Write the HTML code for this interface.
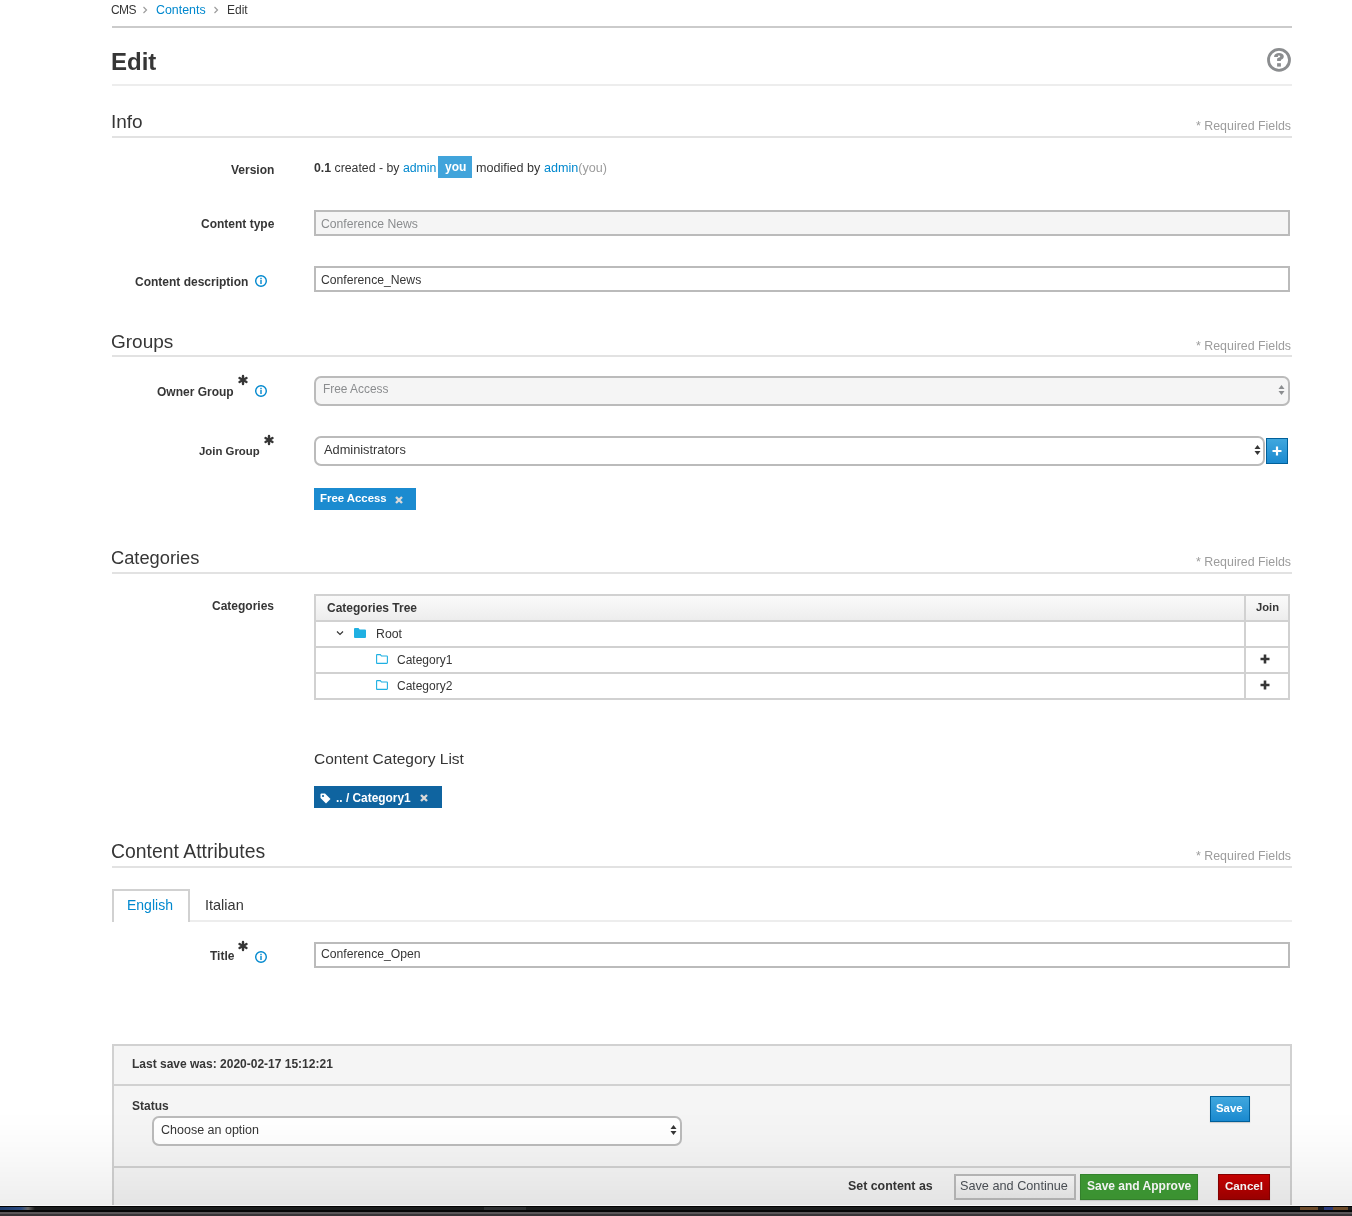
<!DOCTYPE html>
<html><head><meta charset="utf-8">
<style>
html,body{margin:0;padding:0;}
body{width:1352px;height:1216px;position:relative;overflow:hidden;background:#fff;font-family:"Liberation Sans",sans-serif;color:#363636;}
.t{position:absolute;white-space:nowrap;line-height:1;font-size:12px;will-change:transform;}
.b{font-weight:bold;}
.r{text-align:right;}
.lnk{color:#0088ce;}
.hl{position:absolute;left:112px;width:1180px;}
.box{position:absolute;box-sizing:border-box;}
svg{position:absolute;overflow:visible;}
</style></head><body>

<!-- breadcrumb -->
<div class="t" style="left:111px;top:4px;font-size:12px;letter-spacing:-0.6px;">CMS</div>
<svg style="left:142px;top:6px" width="6" height="8"><path d="M1.5 1 L4.5 4 L1.5 7" fill="none" stroke="#9c9c9c" stroke-width="1.2"/></svg>
<div class="t lnk" style="left:156px;top:4px;font-size:12.4px;">Contents</div>
<svg style="left:213px;top:6px" width="6" height="8"><path d="M1.5 1 L4.5 4 L1.5 7" fill="none" stroke="#9c9c9c" stroke-width="1.2"/></svg>
<div class="t" style="left:227px;top:4px;font-size:12px;">Edit</div>
<div class="hl" style="top:26px;height:2px;background:#cbcbcb;"></div>

<!-- title -->
<div class="t b" style="left:111px;top:50px;font-size:24px;">Edit</div>
<svg style="left:1267px;top:48px" width="24" height="24" viewBox="0 0 24 24">
 <circle cx="12" cy="11.9" r="10.5" fill="none" stroke="#8b8d8f" stroke-width="2.8"/>
 <path d="M7 8.9 C7.2 6.3 9.3 5.1 12 5.1 C14.9 5.1 16.8 6.5 16.8 8.6 C16.8 11 14.5 11.6 13.9 12 V13.1 H10.1 V11 C10.1 10 12.2 9.6 13 9 C13.4 8.7 13.3 7.6 12 7.6 C11.2 7.6 10.9 8.1 10.9 8.9 Z" fill="#8b8d8f"/>
 <rect x="10.1" y="15.2" width="3.8" height="3.4" fill="#8b8d8f"/>
</svg>
<div class="hl" style="top:84px;height:2px;background:#ededed;"></div>

<!-- Info -->
<div class="t" style="left:111px;top:112px;font-size:19px;">Info</div>
<div class="t r" style="right:61px;top:120px;font-size:12.4px;color:#9c9c9c;">* Required Fields</div>
<div class="hl" style="top:136px;height:2px;background:#e2e2e2;"></div>

<div class="t b r" style="right:1078px;top:164px;">Version</div>
<div class="t" style="left:314px;top:162px;font-size:12.3px;"><b>0.1</b> created - by <span class="lnk">admin</span></div>
<div class="box" style="left:438px;top:156px;width:34px;height:22px;background:#41a4db;"></div>
<div class="t b" style="left:445px;top:161px;font-size:12px;color:#fff;">you</div>
<div class="t" style="left:476px;top:162px;font-size:12.6px;">modified by <span class="lnk">admin</span><span style="color:#9c9c9c">(you)</span></div>

<div class="t b r" style="right:1078px;top:218px;">Content type</div>
<div class="box" style="left:314px;top:210px;width:976px;height:26px;border:2px solid #bbb;background:#f5f5f5;"></div>
<div class="t" style="left:321px;top:218px;font-size:12.2px;color:#8b8d8f;">Conference News</div>

<div class="t b r" style="right:1104px;top:276px;">Content description</div>
<svg style="left:255px;top:275px" width="12" height="12" viewBox="0 0 12 12"><circle cx="6" cy="6" r="5.3" fill="none" stroke="#0088ce" stroke-width="1.4"/><rect x="5.3" y="2.8" width="1.4" height="1.3" fill="#0088ce"/><rect x="5.3" y="4.8" width="1.4" height="4.2" fill="#0088ce"/></svg>
<div class="box" style="left:314px;top:266px;width:976px;height:26px;border:2px solid #bbb;background:#fff;"></div>
<div class="t" style="left:321px;top:274px;font-size:12.2px;">Conference_News</div>

<!-- Groups -->
<div class="t" style="left:111px;top:332px;font-size:19px;">Groups</div>
<div class="t r" style="right:61px;top:340px;font-size:12.4px;color:#9c9c9c;">* Required Fields</div>
<div class="hl" style="top:355px;height:2px;background:#e2e2e2;"></div>

<div class="t b r" style="right:1118px;top:386px;">Owner Group</div>
<svg style="left:238px;top:375px" width="10" height="10" viewBox="0 0 10 10"><g stroke="#363636" stroke-width="2.4" stroke-linecap="round"><path d="M5 1 V9"/><path d="M1.5 3 L8.5 7"/><path d="M1.5 7 L8.5 3"/></g></svg>
<svg style="left:255px;top:385px" width="12" height="12" viewBox="0 0 12 12"><circle cx="6" cy="6" r="5.3" fill="none" stroke="#0088ce" stroke-width="1.4"/><rect x="5.3" y="2.8" width="1.4" height="1.3" fill="#0088ce"/><rect x="5.3" y="4.8" width="1.4" height="4.2" fill="#0088ce"/></svg>
<div class="box" style="left:314px;top:376px;width:976px;height:30px;border:2px solid #bbb;border-radius:7px;background:#f5f5f5;"></div>
<div class="t" style="left:323px;top:384px;font-size:11.9px;color:#8b8d8f;">Free Access</div>
<svg style="left:1278px;top:384px" width="7" height="12" viewBox="0 0 7 12"><path d="M3.5 1 L6.5 5 H0.5 Z M3.5 11 L6.5 7 H0.5 Z" fill="#8b8d8f"/></svg>

<div class="t b r" style="right:1092px;top:446px;font-size:11.4px;">Join Group</div>
<svg style="left:264px;top:435px" width="10" height="10" viewBox="0 0 10 10"><g stroke="#363636" stroke-width="2.4" stroke-linecap="round"><path d="M5 1 V9"/><path d="M1.5 3 L8.5 7"/><path d="M1.5 7 L8.5 3"/></g></svg>
<div class="box" style="left:314px;top:436px;width:951px;height:30px;border:2px solid #bbb;border-radius:7px;background:#fff;"></div>
<div class="t" style="left:324px;top:444px;font-size:12.8px;">Administrators</div>
<svg style="left:1254px;top:444px" width="7" height="12" viewBox="0 0 7 12"><path d="M3.5 1 L6.5 5 H0.5 Z M3.5 11 L6.5 7 H0.5 Z" fill="#363636"/></svg>
<div class="box" style="left:1266px;top:438px;width:22px;height:26px;border:1.5px solid #00609a;background:linear-gradient(#40a7de,#1b8ad0);"></div>
<svg style="left:1272px;top:446px" width="10" height="10" viewBox="0 0 10 10"><path d="M5 0.5 V9.5 M0.5 5 H9.5" stroke="#fff" stroke-width="2.2"/></svg>

<div class="box" style="left:314px;top:488px;width:102px;height:22px;background:#1b8bd0;"></div>
<div class="t b" style="left:320px;top:493px;font-size:11.4px;color:#fff;">Free Access</div>
<svg style="left:395px;top:496px" width="8" height="8" viewBox="0 0 8 8"><path d="M1 1 L7 7 M7 1 L1 7" stroke="#d8d8d8" stroke-width="2.4"/></svg>

<!-- Categories -->
<div class="t" style="left:111px;top:549px;font-size:18.3px;">Categories</div>
<div class="t r" style="right:61px;top:556px;font-size:12.4px;color:#9c9c9c;">* Required Fields</div>
<div class="hl" style="top:572px;height:2px;background:#e2e2e2;"></div>

<div class="t b r" style="right:1078px;top:600px;">Categories</div>

<!-- table -->
<div class="box" style="left:314px;top:594px;width:976px;height:106px;border:2px solid #d1d1d1;background:#fff;"></div>
<div class="box" style="left:316px;top:596px;width:972px;height:24px;background:linear-gradient(#fafafa,#ededed);"></div>
<div class="box" style="left:316px;top:620px;width:972px;height:2px;background:#d1d1d1;"></div>
<div class="box" style="left:316px;top:646px;width:972px;height:2px;background:#d1d1d1;"></div>
<div class="box" style="left:316px;top:672px;width:972px;height:2px;background:#d1d1d1;"></div>
<div class="box" style="left:1244px;top:596px;width:2px;height:102px;background:#d1d1d1;"></div>
<div class="t b" style="left:327px;top:602px;">Categories Tree</div>
<div class="t b" style="left:1256px;top:602px;font-size:11.2px;">Join</div>
<svg style="left:336px;top:630px" width="8" height="7" viewBox="0 0 8 7"><path d="M1 1.5 L4 4.5 L7 1.5" fill="none" stroke="#363636" stroke-width="1.2"/></svg>
<svg style="left:354px;top:628px" width="12" height="10" viewBox="0 0 12 10"><path d="M0 1 Q0 0 1 0 H4.5 L5.7 1.4 H11 Q12 1.4 12 2.4 V9 Q12 10 11 10 H1 Q0 10 0 9 Z" fill="#1fb0e2"/></svg>
<div class="t" style="left:376px;top:628px;font-size:12.3px;">Root</div>
<svg style="left:376px;top:654px" width="12" height="10" viewBox="0 0 12 10"><path d="M0.6 1.2 Q0.6 0.6 1.2 0.6 H4.3 L5.5 2 H10.8 Q11.4 2 11.4 2.6 V8.8 Q11.4 9.4 10.8 9.4 H1.2 Q0.6 9.4 0.6 8.8 Z" fill="none" stroke="#1fb0e2" stroke-width="1.1"/></svg>
<div class="t" style="left:397px;top:654px;">Category1</div>
<svg style="left:1260px;top:654px" width="10" height="10" viewBox="0 0 10 10"><path d="M5 0.5 V9.5 M0.5 5 H9.5" stroke="#363636" stroke-width="2.6"/></svg>
<svg style="left:376px;top:680px" width="12" height="10" viewBox="0 0 12 10"><path d="M0.6 1.2 Q0.6 0.6 1.2 0.6 H4.3 L5.5 2 H10.8 Q11.4 2 11.4 2.6 V8.8 Q11.4 9.4 10.8 9.4 H1.2 Q0.6 9.4 0.6 8.8 Z" fill="none" stroke="#1fb0e2" stroke-width="1.1"/></svg>
<div class="t" style="left:397px;top:680px;">Category2</div>
<svg style="left:1260px;top:680px" width="10" height="10" viewBox="0 0 10 10"><path d="M5 0.5 V9.5 M0.5 5 H9.5" stroke="#363636" stroke-width="2.6"/></svg>

<div class="t" style="left:314px;top:751px;font-size:15.5px;">Content Category List</div>
<div class="box" style="left:314px;top:786px;width:128px;height:22px;background:#0f64a0;"></div>
<svg style="left:320px;top:792.5px" width="11" height="11" viewBox="0 0 11 11"><path d="M0.5 1.5 Q0.5 0.5 1.5 0.5 H5 L10.5 6 L6 10.5 L0.5 5 Z" fill="#fff"/><circle cx="3" cy="3" r="1.1" fill="#0f64a0"/></svg>
<div class="t b" style="left:336px;top:793px;font-size:11.9px;color:#fff;">.. / Category1</div>
<svg style="left:420px;top:794px" width="8" height="8" viewBox="0 0 8 8"><path d="M1 1 L7 7 M7 1 L1 7" stroke="#d8d8d8" stroke-width="2.4"/></svg>

<!-- Content attributes -->
<div class="t" style="left:111px;top:842px;font-size:19.4px;">Content Attributes</div>
<div class="t r" style="right:61px;top:850px;font-size:12.4px;color:#9c9c9c;">* Required Fields</div>
<div class="hl" style="top:866px;height:2px;background:#e2e2e2;"></div>

<div class="hl" style="top:920px;height:2px;background:#ededed;"></div>
<div class="box" style="left:112px;top:889px;width:78px;height:33px;border:2px solid #d1d1d1;border-bottom:none;background:#fff;"></div>
<div class="t lnk" style="left:127px;top:898px;font-size:14px;">English</div>
<div class="t" style="left:205px;top:898px;font-size:14.5px;">Italian</div>

<div class="t b r" style="right:1118px;top:950px;">Title</div>
<svg style="left:238px;top:941px" width="10" height="10" viewBox="0 0 10 10"><g stroke="#363636" stroke-width="2.4" stroke-linecap="round"><path d="M5 1 V9"/><path d="M1.5 3 L8.5 7"/><path d="M1.5 7 L8.5 3"/></g></svg>
<svg style="left:255px;top:951px" width="12" height="12" viewBox="0 0 12 12"><circle cx="6" cy="6" r="5.3" fill="none" stroke="#0088ce" stroke-width="1.4"/><rect x="5.3" y="2.8" width="1.4" height="1.3" fill="#0088ce"/><rect x="5.3" y="4.8" width="1.4" height="4.2" fill="#0088ce"/></svg>
<div class="box" style="left:314px;top:942px;width:976px;height:26px;border:2px solid #bbb;background:#fff;"></div>
<div class="t" style="left:321px;top:948px;font-size:12.2px;">Conference_Open</div>

<!-- footer panel -->
<div class="box" style="left:112px;top:1044px;width:1180px;height:180px;border:2px solid #d1d1d1;background:#f5f5f5;"></div>
<div class="box" style="left:114px;top:1084px;width:1176px;height:2px;background:#d1d1d1;"></div>
<div class="box" style="left:114px;top:1166px;width:1176px;height:2px;background:#d1d1d1;"></div>
<div class="t b" style="left:132px;top:1058px;">Last save was: 2020-02-17 15:12:21</div>
<div class="t b" style="left:132px;top:1100px;">Status</div>
<div class="box" style="left:152px;top:1116px;width:530px;height:30px;border:2px solid #bbb;border-radius:7px;background:#fff;"></div>
<div class="t" style="left:161px;top:1124px;font-size:12.5px;">Choose an option</div>
<svg style="left:670px;top:1124px" width="7" height="12" viewBox="0 0 7 12"><path d="M3.5 1 L6.5 5 H0.5 Z M3.5 11 L6.5 7 H0.5 Z" fill="#363636"/></svg>
<div class="box" style="left:1210px;top:1096px;width:40px;height:26px;border:1.5px solid #00609a;box-shadow:0 1px 1px rgba(0,0,0,0.15);background:linear-gradient(#40a7de,#1b8ad0);"></div>
<div class="t b" style="left:1216px;top:1103px;font-size:11.4px;color:#fff;">Save</div>

<div class="t b" style="left:848px;top:1180px;font-size:12.4px;">Set content as</div>
<div class="box" style="left:954px;top:1174px;width:122px;height:26px;border:2px solid #bbb;background:linear-gradient(#fafafa,#ededed);"></div>
<div class="t" style="left:960px;top:1180px;font-size:12.7px;color:#4d5258;">Save and Continue</div>
<div class="box" style="left:1080px;top:1174px;width:118px;height:26px;border:1px solid #37892f;box-shadow:0 1px 1px rgba(0,0,0,0.12);background:#3f9c35;"></div>
<div class="t b" style="left:1087px;top:1180px;color:#fff;">Save and Approve</div>
<div class="box" style="left:1218px;top:1174px;width:52px;height:26px;border:1px solid #8b0000;box-shadow:0 1px 1px rgba(0,0,0,0.15);background:linear-gradient(#cc0000,#a30000);"></div>
<div class="t b" style="left:1225px;top:1180px;font-size:11.6px;color:#fff;">Cancel</div>

<!-- bottom overlay gradient + dark bar -->
<div class="box" style="left:0;top:1110px;width:1352px;height:95px;background:linear-gradient(rgba(0,0,0,0) 0%,rgba(0,0,0,0.01) 31%,rgba(0,0,0,0.03) 57%,rgba(0,0,0,0.045) 73%,rgba(0,0,0,0.065) 100%);pointer-events:none;"></div>
<div class="box" style="left:0;top:1205px;width:1352px;height:1px;background:#f8f8f8;"></div>
<div class="box" style="left:0;top:1206px;width:1352px;height:1px;background:#020202;"></div>
<div class="box" style="left:0;top:1207px;width:1352px;height:3px;background:#1a1c1d;"></div>
<div class="box" style="left:0;top:1210px;width:1352px;height:2px;background:#050606;"></div>
<div class="box" style="left:0;top:1212px;width:1352px;height:2px;background:#5a5658;"></div>
<div class="box" style="left:0;top:1214px;width:1352px;height:2px;background:#373336;"></div>
<div class="box" style="left:0;top:1207px;width:35px;height:3px;background:linear-gradient(90deg,#1c3a6a,#2a4a80 60%,#666 80%,#1a1c1d);"></div>
<div class="box" style="left:484px;top:1207px;width:42px;height:3px;background:#2e3032;"></div>
<div class="box" style="left:1300px;top:1207px;width:18px;height:3px;background:#6b4a2a;"></div>
<div class="box" style="left:1324px;top:1207px;width:9px;height:3px;background:#2a3a7a;"></div>
<div class="box" style="left:1333px;top:1207px;width:15px;height:3px;background:#6b4a2a;"></div>
</body></html>
